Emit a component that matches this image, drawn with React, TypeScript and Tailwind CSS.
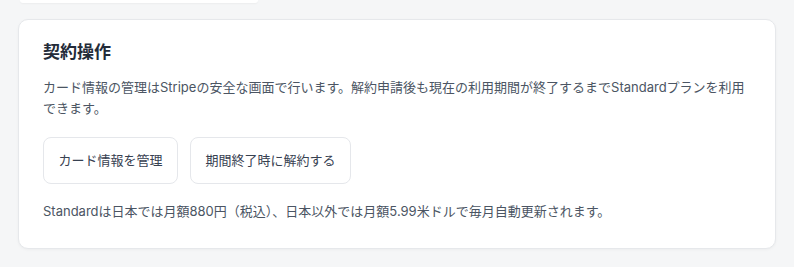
const font = {
  fontFamily: '"Inter", "Noto Sans CJK JP", sans-serif',
}

export default function App() {
  return (
    <div className="min-h-screen bg-[#f5f6f7] px-[18px]" style={font}>
      {/* bottom edge of the card above */}
      <div className="ml-[2px] h-[3px] w-[238px] rounded-b-lg bg-white shadow-[0_1px_2px_rgba(0,0,0,0.04)]" />

      <section className="mt-4 rounded-[10px] border border-[#e6e8eb] bg-white px-6 pt-5 pb-[26px] shadow-[0_1px_3px_rgba(0,0,0,0.04)]">
        <h2 className="text-[17px] font-bold leading-[25px] text-[#232b38]">
          契約操作
        </h2>
        <p className="mt-3 text-[13px] leading-[21px] text-[#4b5563]">
          カード情報の管理はStripeの安全な画面で行います。解約申請後も現在の利用期間が終了するまでStandardプランを利用できます。
        </p>

        <div className="mt-[18px] flex gap-3">
          <button
            type="button"
            className="h-[47px] rounded-lg border border-[#e5e7eb] bg-white px-[14.5px] text-[13px] text-[#374151]"
          >
            カード情報を管理
          </button>
          <button
            type="button"
            className="h-[47px] rounded-lg border border-[#e5e7eb] bg-white px-[14.5px] text-[13px] text-[#374151]"
          >
            期間終了時に解約する
          </button>
        </div>

        <p className="mt-[17px] text-[13px] leading-[21px] text-[#4b5563]">
          Standardは日本では月額880円（税込）、日本以外では月額5.99米ドルで毎月自動更新されます。
        </p>
      </section>
    </div>
  )
}
